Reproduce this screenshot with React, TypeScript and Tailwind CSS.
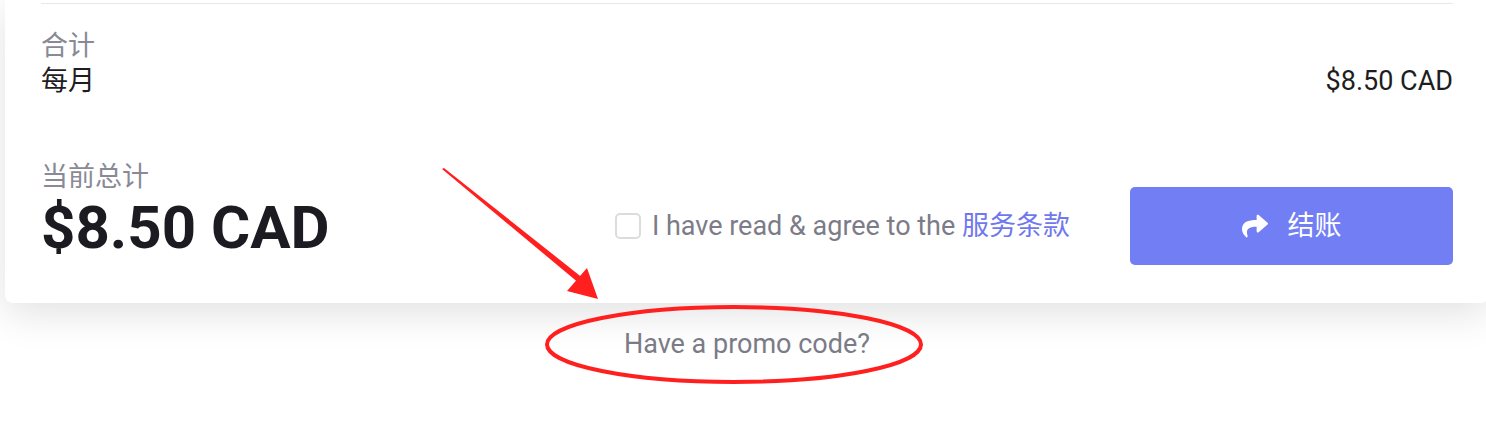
import React from "react";
import { FaShare } from "react-icons/fa";

const Annotation = () => (
  <svg
    className="pointer-events-none absolute inset-0"
    width="1486"
    height="424"
    viewBox="0 0 1486 424"
  >
    <polygon points="442,169 444,168 584,279 580,284" fill="#ff1f1f" />
    <polygon points="598,299 567,291 587,268" fill="#ff1f1f" />
    <ellipse cx="734" cy="344.5" rx="187" ry="37.5" fill="none" stroke="#ff1f1f" strokeWidth="4" />
  </svg>
);

const App = () => {
  return (
    <div className="relative h-[424px] w-full overflow-hidden bg-white font-['Roboto','Noto_Sans_CJK_SC',sans-serif]">
      <div className="ml-[5px] w-[1484px] rounded-b-[8px] bg-white px-[36px] pt-[3px] pb-[38px] shadow-[0_10px_40px_rgba(0,0,0,0.12)]">
        <div className="border-t border-[#e8e8ea]" />

        <div className="mt-[25px] flex items-end justify-between text-[27px] leading-[35px]">
          <div>
            <p className="text-[#8a8a96]">合计</p>
            <p className="text-[#1d1d22]">每月</p>
          </div>
          <p className="text-[#1d1d22]">$8.50 CAD</p>
        </div>

        <div className="mt-[61px] flex items-end justify-between">
          <div className="pb-[7px]">
            <p className="text-[27px] leading-[35px] text-[#8a8a96]">当前总计</p>
            <h2 className="mt-[3px] text-[60px] font-bold leading-none text-[#1b1b21]">$8.50 CAD</h2>
          </div>

          <div className="flex items-center gap-[60px]">
            <label className="flex items-center gap-[11px] text-[27px] text-[#7c7c88]">
              <span className="h-[26px] w-[26px] rounded-[5px] border-2 border-[#dcdcdf] bg-white" />
              <span>
                I have read &amp; agree to the <span className="text-[#6f78ee]">服务条款</span>
              </span>
            </label>
            <button className="flex h-[78px] w-[323px] items-center justify-center gap-[20px] rounded-[5px] bg-[#727ef4] text-[27px] text-white">
              <FaShare size={26} />
              <span>结账</span>
            </button>
          </div>
        </div>
      </div>

      <p className="mt-[24px] ml-[5px] w-[1484px] text-center text-[27px] leading-[34px] text-[#7b7b87]">
        Have a promo code?
      </p>

      <Annotation />
    </div>
  );
};

export default App;
